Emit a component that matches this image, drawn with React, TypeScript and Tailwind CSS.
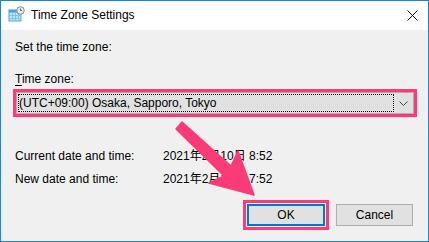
import React from 'react';

const FONT = { fontFamily: '"Liberation Sans", "Noto Sans CJK JP", sans-serif' };

// small calendar + clock glyph in the title bar
const TitleIcon = () => (
  <svg width="17" height="17" viewBox="0 0 17 17">
    <rect x="1" y="4" width="12" height="11" fill="#bfe3fa" stroke="#4aa3df" strokeWidth="1" />
    <rect x="1" y="4" width="12" height="2.5" fill="#4aa3df" />
    <path d="M4.5 7v8M7.5 7v8M10.5 7v8M1 9.5h12M1 12.5h12" stroke="#7cc3ee" strokeWidth="1" />
    <circle cx="12.5" cy="4.5" r="3.8" fill="#e8e8e8" stroke="#8a8a8a" strokeWidth="1" />
    <path d="M12.5 2.5v2h1.6" stroke="#555" strokeWidth="0.9" fill="none" />
  </svg>
);

export default function App() {
  return (
    <div
      className="relative w-[429px] h-[242px] border border-[#1883d7] bg-[#f0f0f0] flex flex-col text-[12px] leading-[15px] text-black overflow-hidden"
      style={FONT}
    >
      {/* Title bar */}
      <div className="h-[29px] bg-white flex items-center shrink-0">
        <div className="ml-[7px] mt-[-2px]">
          <TitleIcon />
        </div>
        <span className="ml-[6px] text-[12px]">Time Zone Settings</span>
        <svg className="ml-auto mr-[10px]" width="11" height="11" viewBox="0 0 11 11">
          <path d="M0.5 0.5l10 10M10.5 0.5l-10 10" stroke="#111" strokeWidth="1" />
        </svg>
      </div>

      {/* Body */}
      <div className="flex flex-col px-[14px] pt-[10px]">
        <div>Set the time zone:</div>
        <div className="mt-[17px]">
          <span className="underline underline-offset-2">T</span>ime zone:
        </div>

        <div className="mt-[5px] ml-[1px] h-[22px] border border-[#adadad] bg-[#e1e1e1] flex items-center p-[1px] outline-[3px] outline-solid outline-[#fb3b78] outline-offset-0">
          <div className="flex-1 h-full border border-dotted border-black flex items-center">
            (UTC+09:00) Osaka, Sapporo, Tokyo
          </div>
          <div className="w-[18px] flex justify-center">
            <svg width="9" height="5" viewBox="0 0 9 5">
              <path d="M0.5 0.5l4 4 4-4" stroke="#444" strokeWidth="1" fill="none" />
            </svg>
          </div>
        </div>

        <div className="mt-[35px] grid grid-cols-[148px_1fr] gap-y-[8px]">
          <div>Current date and time:</div>
          <div>2021年2月10日 8:52</div>
          <div>New date and time:</div>
          <div>2021年2月10日 7:52</div>
        </div>

        <div className="mt-[17px] flex justify-end gap-[11px] mr-[1px]">
          <button className="w-[78px] h-[22px] bg-[#e1e1e1] border-2 border-[#0078d7] flex items-center justify-center outline-[3px] outline-solid outline-[#fb3b78] outline-offset-[1px]">
            OK
          </button>
          <button className="w-[77px] h-[22px] bg-[#e1e1e1] border border-[#adadad] flex items-center justify-center">
            Cancel
          </button>
        </div>
      </div>

      {/* annotation arrow */}
      <svg className="absolute left-0 top-0 pointer-events-none" width="429" height="242" viewBox="0 0 429 242">
        <polygon
          points="181,121 230,165 237,150 253,194 208,182 223,175 175,128"
          fill="#fb3b78"
          stroke="#fb3b78"
          strokeWidth="1.5"
          strokeLinejoin="round"
        />
      </svg>
    </div>
  );
}
